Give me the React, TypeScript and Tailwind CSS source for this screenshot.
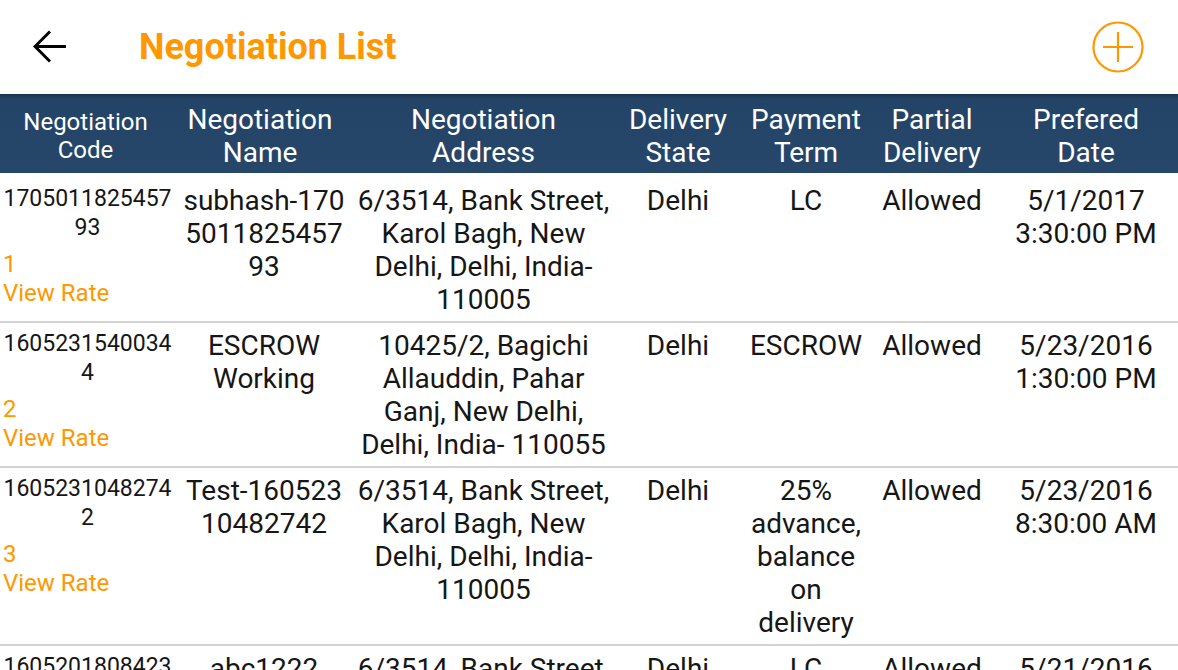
import React from "react";

type Row = {
  code: string;
  idx: string;
  name: string;
  address: string;
  state: string;
  term: string;
  partial: string;
  date: string;
};

const rows: Row[] = [
  {
    code: "170501182545793",
    idx: "1",
    name: "subhash-17050118254579\u200B3",
    address: "6/3514, Bank Street, Karol Bagh, New Delhi, Delhi, India- 110005",
    state: "Delhi",
    term: "LC",
    partial: "Allowed",
    date: "5/1/2017 3:30:00 PM",
  },
  {
    code: "16052315400344",
    idx: "2",
    name: "ESCROW Working",
    address: "10425/2, Bagichi Allauddin, Pahar Ganj, New Delhi, Delhi, India- 110055",
    state: "Delhi",
    term: "ESCROW",
    partial: "Allowed",
    date: "5/23/2016 1:30:00 PM",
  },
  {
    code: "16052310482742",
    idx: "3",
    name: "Test-16052310482742",
    address: "6/3514, Bank Street, Karol Bagh, New Delhi, Delhi, India- 110005",
    state: "Delhi",
    term: "25% advance, balance on delivery",
    partial: "Allowed",
    date: "5/23/2016 8:30:00 AM",
  },
  {
    code: "16052018084231",
    idx: "4",
    name: "abc1222",
    address: "6/3514, Bank Street, Karol Bagh, New Delhi, Delhi, India- 110005",
    state: "Delhi",
    term: "LC",
    partial: "Allowed",
    date: "5/21/2016 10:30:00 AM",
  },
];

const cols = "grid grid-cols-[175px_178px_261px_128px_128px_124px_184px]";

function DataRow({ r, first }: { r: Row; first: boolean }) {
  const nameBreak = r.name.includes(" ") ? "break-words" : "break-all";
  return (
    <div
      className={`${cols} items-start text-[28px] leading-[33px] text-[#161616] ${
        first ? "pt-[11px]" : "pt-[6px]"
      } pb-[5px] border-b-2 border-[#d2d2d2]`}
    >
      <div className="px-[2px] text-[23px] leading-[29px]">
        <div className="text-center break-all">{r.code}</div>
        <div className="mt-[8px] text-[24px] text-[#ff9800] pl-[1px]">{r.idx}</div>
        <div className="text-[24px] text-[#ff9800] pl-[1px]">View Rate</div>
      </div>
      <div className={`px-[6px] text-center ${nameBreak}`}>{r.name}</div>
      <div className="px-[4px] text-center">{r.address}</div>
      <div className="px-[4px] text-center">{r.state}</div>
      <div className="px-[4px] text-center">{r.term}</div>
      <div className="px-[2px] text-center">{r.partial}</div>
      <div className="px-[4px] text-center">{r.date}</div>
    </div>
  );
}

export default function App() {
  return (
    <div
      className="w-[1178px] h-[670px] overflow-hidden bg-white"
      style={{ fontFamily: "Roboto, 'Noto Sans', sans-serif" }}
    >
      <div className="flex items-center h-[94px] pl-[33px] pr-[33px]">
        <svg width="34" height="34" viewBox="0 0 34 34" className="shrink-0">
          <path d="M2 16.5H33" stroke="#000" strokeWidth="3" fill="none" />
          <path d="M17 1.5L2 16.5L17 31.5" stroke="#000" strokeWidth="3" fill="none" />
        </svg>
        <div className="ml-[72px] text-[36px] font-bold text-[#ff9800] leading-none">
          Negotiation List
        </div>
        <svg width="54" height="54" viewBox="0 0 54 54" className="ml-auto shrink-0">
          <circle cx="27" cy="27" r="24.5" stroke="#ff9800" strokeWidth="2.2" fill="none" />
          <path d="M27 12V42M12 27H42" stroke="#ff9800" strokeWidth="2.2" fill="none" />
        </svg>
      </div>
      <div
        className={`${cols} h-[79px] pt-[4px] items-center text-white text-center text-[28px] leading-[33px] bg-[linear-gradient(to_bottom,#1b3450_0px,#244467_5px,#264769_100%)]`}
      >
        <div className="text-[24px] leading-[28px] pr-[4px]">
          Negotiation
          <br />
          Code
        </div>
        <div className="pr-[8px]">
          Negotiation
          <br />
          Name
        </div>
        <div>
          Negotiation
          <br />
          Address
        </div>
        <div>
          Delivery
          <br />
          State
        </div>
        <div>
          Payment
          <br />
          Term
        </div>
        <div>
          Partial
          <br />
          Delivery
        </div>
        <div>
          Prefered
          <br />
          Date
        </div>
      </div>
      {rows.map((r, i) => (
        <DataRow key={i} r={r} first={i === 0} />
      ))}
    </div>
  );
}
